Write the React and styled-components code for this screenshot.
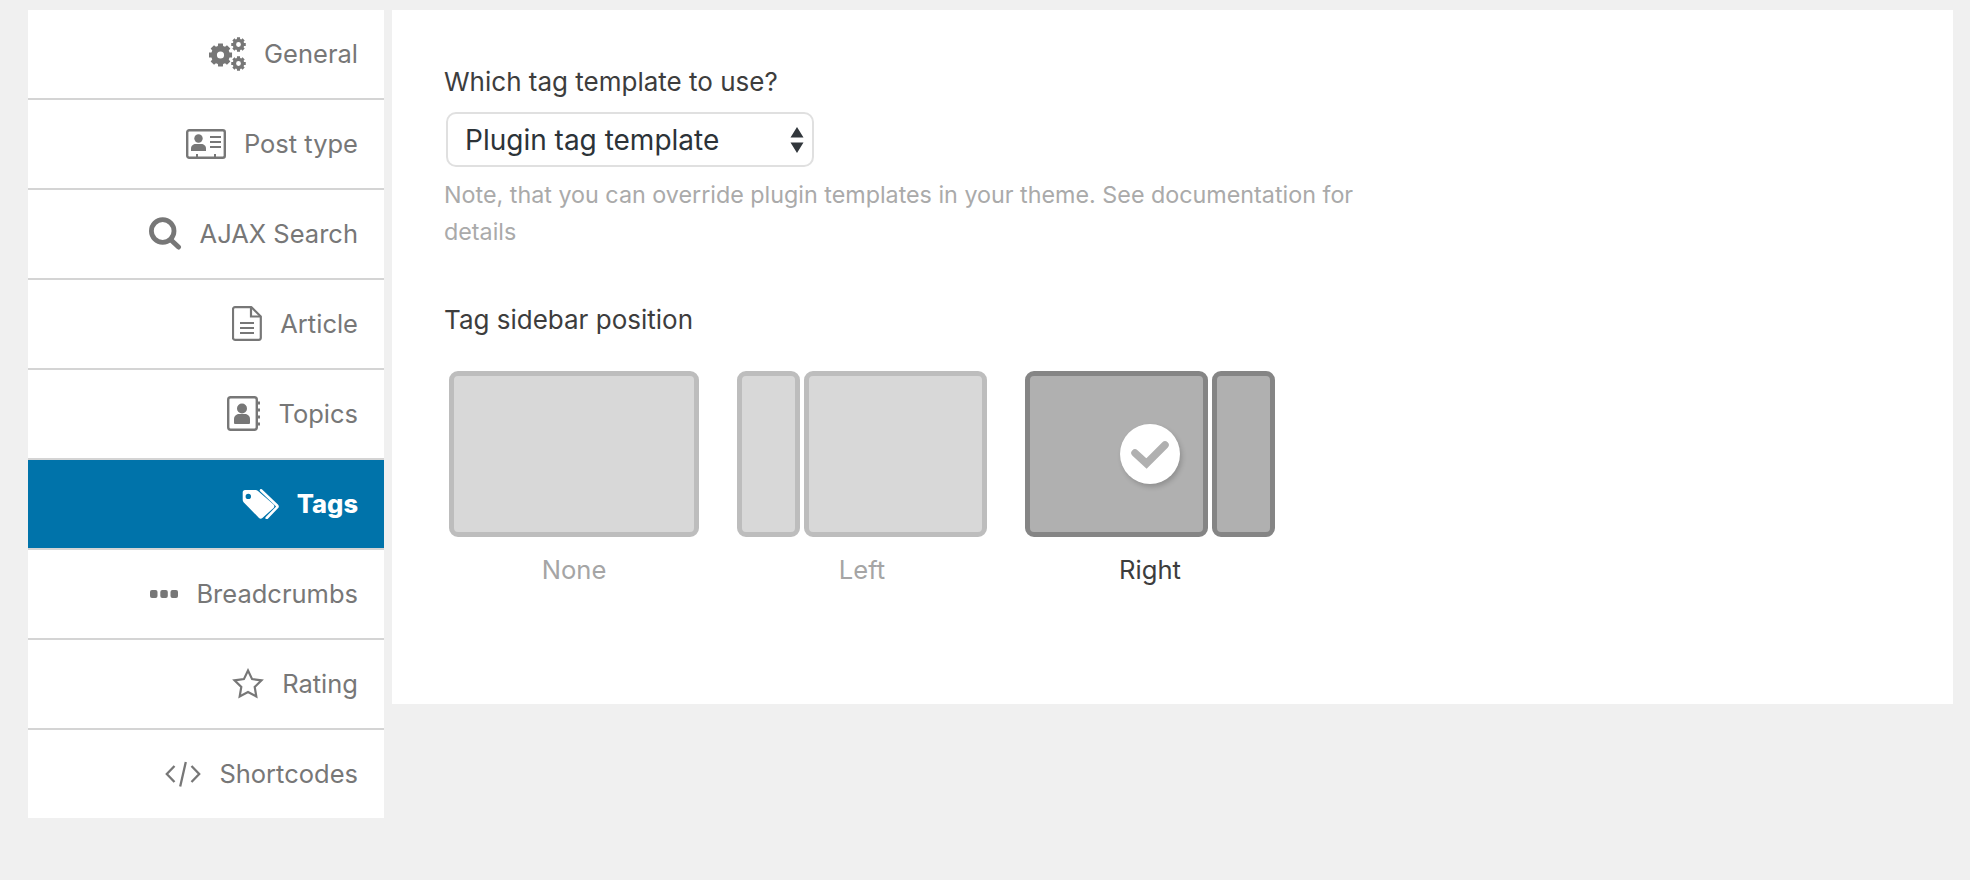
import React from "react";
import styled, { createGlobalStyle } from "styled-components";

const GlobalStyle = createGlobalStyle`
  html, body {
    margin: 0;
    padding: 0;
    background: #f0f0f0;
    font-family: Inter, "Liberation Sans", sans-serif;
  }
`;

// builds one toothed ring, the hole comes from evenodd
const gearPath = (cx, cy, outer, root, hole, teeth) => {
  const step = (Math.PI * 2) / teeth;
  let d = "";
  for (let i = 0; i < teeth; i++) {
    const a = i * step;
    const pts = [
      [root, a - step * 0.36],
      [outer, a - step * 0.26],
      [outer, a + step * 0.26],
      [root, a + step * 0.36],
    ];
    pts.forEach(([r, t], j) => {
      const x = (cx + r * Math.cos(t)).toFixed(2);
      const y = (cy + r * Math.sin(t)).toFixed(2);
      d += `${i === 0 && j === 0 ? "M" : "L"}${x} ${y}`;
    });
  }
  d += "Z";
  d += `M${cx + hole} ${cy}a${hole} ${hole} 0 1 0 ${-2 * hole} 0a${hole} ${hole} 0 1 0 ${2 * hole} 0Z`;
  return d;
};

const GearsIcon = () => (
  <svg width="37" height="34" viewBox="0 0 37 34">
    <path fillRule="evenodd" fill="currentColor" d={gearPath(11.5, 18, 11.8, 9.4, 3.6, 8)} />
    <path fillRule="evenodd" fill="currentColor" d={gearPath(29.5, 7.5, 7.4, 5.8, 2.4, 8)} />
    <path fillRule="evenodd" fill="currentColor" d={gearPath(29.5, 26.5, 7.4, 5.8, 2.4, 8)} />
  </svg>
);

const IdCardIcon = () => (
  <svg width="40" height="30" viewBox="0 0 40 30">
    <rect x="1.2" y="1.2" width="37.6" height="27.6" rx="2" fill="none" stroke="currentColor" strokeWidth="2.4" />
    <circle cx="12.5" cy="9.5" r="4.2" fill="currentColor" />
    <path d="M5 22v-2.500c0-3 2.500-4.500 4.500-4.500h6c2 0 4.500 1.500 4.500 4.500V22z" fill="currentColor" />
    <path d="M24 8h11M24 13h11M24 18h11" stroke="currentColor" strokeWidth="2" />
    <path d="M11 28v-3M29 28v-3" stroke="currentColor" strokeWidth="2" />
  </svg>
);

const SearchIcon = () => (
  <svg width="33" height="33" viewBox="0 0 33 33">
    <circle cx="13.700" cy="14" r="11.300" fill="none" stroke="currentColor" strokeWidth="4.800" />
    <path d="M22 23l7.500 7" stroke="currentColor" strokeWidth="5" strokeLinecap="round" />
  </svg>
);

const DocIcon = () => (
  <svg width="30" height="35" viewBox="0 0 30 35">
    <path d="M3 1.200h16.500L28.800 10.500V31.800a2 2 0 0 1-2 2H3a2 2 0 0 1-2-2V3.200a2 2 0 0 1 2-2z" fill="none" stroke="currentColor" strokeWidth="2.200" strokeLinejoin="round" />
    <path d="M19 1.500V10.500H28.500" fill="none" stroke="currentColor" strokeWidth="2.200" />
    <path d="M8 17h14M8 22h14M8 27h14" stroke="currentColor" strokeWidth="2" />
  </svg>
);

const BookIcon = () => (
  <svg width="33" height="35" viewBox="0 0 33 35">
    <rect x="1.200" y="1.200" width="28.600" height="32.600" rx="2.500" fill="none" stroke="currentColor" strokeWidth="2.400" />
    <circle cx="15" cy="12.500" r="5" fill="currentColor" />
    <path d="M7 27v-4c0-3.500 3-5 5-5h6c2 0 5 1.500 5 5v4a1 1 0 0 1-1 1H8a1 1 0 0 1-1-1z" fill="currentColor" />
    <path d="M30 7h3M30 14h3M30 21h3M30 28h3" stroke="currentColor" strokeWidth="3" />
  </svg>
);

const TagsIcon = () => (
  <svg width="37" height="30" viewBox="0 0 37 30">
    <path
      fillRule="evenodd"
      fill="currentColor"
      d="M3 1h10.500c1 0 1.800.4 2.500 1l15.600 13.600c1 1 1 2.300 0 3.300L20.400 29c-1 1-2.400 1-3.400 0L1.600 13.200C1 12.500.7 11.700.7 10.800V3.300C.7 2 1.700 1 3 1zM6.300 4.700a2.700 2.700 0 1 0 0 5.400 2.700 2.700 0 0 0 0-5.400z"
    />
    <path d="M19 1.300l16 15.200c.6.600.6 1.300 0 1.900L24.700 29" fill="none" stroke="currentColor" strokeWidth="2.600" strokeLinecap="round" />
  </svg>
);

const DotsIcon = () => (
  <svg width="28" height="8" viewBox="0 0 28 8">
    <rect x="0" y="0" width="7.500" height="8" rx="2" fill="currentColor" />
    <rect x="10.300" y="0" width="7.500" height="8" rx="2" fill="currentColor" />
    <rect x="20.500" y="0" width="7.500" height="8" rx="2" fill="currentColor" />
  </svg>
);

const StarIcon = () => (
  <svg width="32" height="31" viewBox="0 0 32 31">
    <path d="M16 2.500l4.100 8.600 9.400 1.300-6.800 6.600 1.600 9.400L16 24l-8.300 4.400 1.600-9.400-6.800-6.600 9.400-1.300z" fill="none" stroke="currentColor" strokeWidth="2.200" strokeLinejoin="miter" />
  </svg>
);

const CodeIcon = () => (
  <svg width="36" height="26" viewBox="0 0 36 26">
    <path d="M9.500 5L1.800 13l7.700 8M26.500 5l7.700 8-7.700 8M20.800 1L15.200 25.500" fill="none" stroke="currentColor" strokeWidth="2.300" />
  </svg>
);

const Page = styled.div`
  display: flex;
  align-items: flex-start;
  gap: 8px;
  padding: 10px 17px 0 28px;
  height: 880px;
  box-sizing: border-box;
`;

const Sidebar = styled.nav`
  width: 356px;
  flex: none;
  display: flex;
  flex-direction: column;
  background: #fff;
`;

const NavRow = styled.a`
  display: flex;
  align-items: center;
  justify-content: flex-end;
  gap: 18px;
  height: 90px;
  box-sizing: border-box;
  padding: 0 26px 1px 0;
  border-bottom: 2px solid #d4d4d4;
  font-size: 25.5px;
  color: ${(p) => (p.$active ? "#fff" : "#777")};
  font-weight: ${(p) => (p.$active ? 800 : 400)};
  background: ${(p) => (p.$active ? "#0073aa" : "#fff")};

  &:last-child {
    border-bottom: 0;
    height: 88px;
  }
`;

const Panel = styled.main`
  flex: 1;
  height: 694px;
  background: #fff;
  box-sizing: border-box;
  padding: 56px 0 0 52px;
`;

const FieldLabel = styled.div`
  font-size: 26px;
  line-height: 32px;
  color: #3d3d3d;
`;

const SelectBox = styled.div`
  display: flex;
  align-items: center;
  justify-content: space-between;
  width: 368px;
  height: 55px;
  box-sizing: border-box;
  margin: 14px 0 0 2px;
  padding: 0 8px 0 17px;
  border: 2px solid #e0e0e0;
  border-radius: 10px;
  font-size: 28px;
  color: #2c3338;
`;

const Spinner = styled.svg`
  width: 14px;
  height: 26px;
  fill: #32373c;
`;

const Note = styled.p`
  width: 930px;
  margin: 9px 0 0;
  font-size: 23.3px;
  line-height: 37px;
  color: #aaa;
`;

const SectionLabel = styled(FieldLabel)`
  margin-top: 54px;
`;

const Options = styled.div`
  display: flex;
  gap: 38px;
  margin: 35px 0 0 5px;
`;

const Option = styled.div`
  width: 250px;
`;

const Layout = styled.div`
  display: flex;
  gap: 4px;
  height: 166px;
`;

const Pane = styled.div`
  position: relative;
  box-sizing: border-box;
  flex: ${(p) => (p.$side ? "0 0 63px" : "1")};
  border: 5px solid ${(p) => (p.$selected ? "#858585" : "#bdbdbd")};
  border-radius: 9px;
  background: ${(p) => (p.$selected ? "#b0b0b0" : "#d8d8d8")};
`;

const CheckBadge = styled.span`
  position: absolute;
  top: 50%;
  left: 90px;
  width: 60px;
  height: 60px;
  transform: translateY(-50%);
  display: flex;
  align-items: center;
  justify-content: center;
  border-radius: 50%;
  background: #fff;
  box-shadow: 2px 3px 5px rgba(0, 0, 0, 0.18);
`;

const OptionName = styled.div`
  margin-top: 17px;
  text-align: center;
  font-size: 25.6px;
  line-height: 32px;
  color: ${(p) => (p.$selected ? "#3d3d3d" : "#a5a5a5")};
`;

const navItems = [
  { label: "General", icon: <GearsIcon /> },
  { label: "Post type", icon: <IdCardIcon /> },
  { label: "AJAX Search", icon: <SearchIcon /> },
  { label: "Article", icon: <DocIcon /> },
  { label: "Topics", icon: <BookIcon /> },
  { label: "Tags", icon: <TagsIcon />, active: true },
  { label: "Breadcrumbs", icon: <DotsIcon /> },
  { label: "Rating", icon: <StarIcon /> },
  { label: "Shortcodes", icon: <CodeIcon /> },
];

export default function App() {
  return (
    <>
      <GlobalStyle />
      <Page>
        <Sidebar>
          {navItems.map((item) => (
            <NavRow key={item.label} $active={item.active}>
              {item.icon}
              <span>{item.label}</span>
            </NavRow>
          ))}
        </Sidebar>
        <Panel>
          <FieldLabel>Which tag template to use?</FieldLabel>
          <SelectBox>
            Plugin tag template
            <Spinner viewBox="0 0 14 26">
              <path d="M7 0l6.500 10.500H.5zM7 26L.5 15.500h13z" />
            </Spinner>
          </SelectBox>
          <Note>Note, that you can override plugin templates in your theme. See documentation for details</Note>
          <SectionLabel>Tag sidebar position</SectionLabel>
          <Options>
            <Option>
              <Layout>
                <Pane />
              </Layout>
              <OptionName>None</OptionName>
            </Option>
            <Option>
              <Layout>
                <Pane $side />
                <Pane />
              </Layout>
              <OptionName>Left</OptionName>
            </Option>
            <Option>
              <Layout>
                <Pane $selected>
                  <CheckBadge>
                    <svg width="40" height="30" viewBox="0 0 40 30">
                      <path d="M5 14l11.500 10.500L35 6" fill="none" stroke="#b0b0b0" strokeWidth="7.500" strokeLinejoin="miter" strokeLinecap="round" />
                    </svg>
                  </CheckBadge>
                </Pane>
                <Pane $side $selected />
              </Layout>
              <OptionName $selected>Right</OptionName>
            </Option>
          </Options>
        </Panel>
      </Page>
    </>
  );
}
